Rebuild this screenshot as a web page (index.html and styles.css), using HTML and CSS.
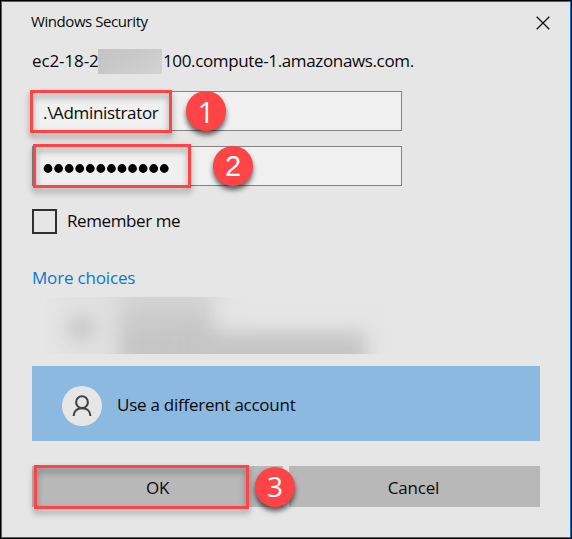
FILE: index.html
```html
<!DOCTYPE html>
<html lang="en">
<head>
<meta charset="utf-8">
<title>Windows Security</title>
<link rel="stylesheet" href="styles.css">
</head>
<body>
<main class="dialog">
  <header class="titlebar">
    <h1 class="title">Windows Security</h1>
    <svg class="close" viewBox="0 0 14 14" width="14" height="14"><path d="M.7.7l12.6 12.6M13.3.7L.7 13.3"/></svg>
  </header>
  <p class="host"><span class="host-start">ec2-18-2</span><span class="redacted"></span><span class="host-end">100.compute-1.amazonaws.com.</span></p>
  <div class="field user">
    <span class="username">.\Administrator</span>
    <span class="callout callout-user"></span><span class="badge badge-user">1</span>
  </div>
  <div class="field">
    <svg class="dots" width="128" height="10" viewBox="0 0 128 10"><path d="M5 4.5h120"/></svg>
    <span class="callout callout-pass"></span><span class="badge badge-pass">2</span>
  </div>
  <label class="remember"><span class="box"></span><span class="remember-text">Remember me</span></label>
  <a class="more">More choices</a>
  <div class="account-hidden"><i class="smudge face"></i><i class="smudge name"></i><i class="smudge detail"></i></div>
  <div class="account">
    <span class="avatar"><svg width="20" height="22" viewBox="0 0 20 22"><circle cx="10" cy="7.2" r="5.9"/><path d="M1.6 21c0-5 3.6-7.9 8.4-7.9s8.4 2.9 8.4 7.9"/></svg></span>
    <span class="account-text">Use a different account</span>
  </div>
  <footer class="actions">
    <div class="button primary"><span class="button-text">OK</span><span class="callout callout-ok"></span><span class="badge badge-ok">3</span></div>
    <div class="button"><span class="button-text">Cancel</span></div>
  </footer>
</main>
</body>
</html>
```
FILE: styles.css
```css
* { box-sizing: border-box; }
body { margin: 0; background: #000; font-family: "Open Sans", "Noto Sans", sans-serif; font-size: 17px; color: #0a0a0a; }
.dialog { width: 570px; height: 537px; margin: 1px; border: 1px solid #0874cc; background: #e6e6e6; padding: 0 30px; white-space: nowrap; }
.titlebar { height: 41px; display: flex; justify-content: space-between; }
.title { margin: 8px 0 0 -1px; font-size: 15px; line-height: 22px; font-weight: 400; letter-spacing: -.43px; }
.close { margin: 14px -10px 0 0; fill: none; stroke: #111; stroke-width: 1.3; }
.host { display: flex; align-items: center; margin: 0; height: 34px; letter-spacing: -.36px; }
.host-start { width: 66px; letter-spacing: -.1px; }
.redacted { position: relative; width: 64px; height: 25px; margin-top: 2px; background: linear-gradient(145deg, #c3c3c3, #c9c9c9 45%, #d3d3d3); }
.host-end { margin-left: 1px; }
.field { position: relative; display: flex; align-items: center; width: 370px; height: 40px; margin-top: 15px; padding-left: 10px; border: 1px solid #838383; background: #f0f0f0; }
.user { margin-top: 14px; }
.username { margin-top: 2px; letter-spacing: -.33px; }
.dots { margin-top: 5px; fill: none; stroke: #000; stroke-width: 8.8; stroke-linecap: round; stroke-dasharray: 0 10.57; }
.callout { position: absolute; border: 3px solid #fe4446; filter: drop-shadow(0 4px 3px rgba(0, 0, 0, .4)); }
.callout-user { left: -3px; top: -2px; width: 142px; height: 43px; }
.callout-pass { left: 0; top: -3px; width: 158px; height: 44px; }
.callout-ok { left: 2px; top: -1px; width: 215px; height: 44px; }
.badge { position: absolute; width: 40px; height: 40px; border-radius: 50%; background: #fe4446; color: #fff; text-align: center; font: 29px/41px "Liberation Sans", Arial, sans-serif; box-shadow: 0 4px 5px rgba(0, 0, 0, .6); }
.badge-user { left: 153px; top: -1px; font-family: "Open Sans", sans-serif; }
.badge-pass { left: 180px; top: -1px; }
.badge-ok { left: 223px; top: 1px; font-family: "Open Sans", sans-serif; font-size: 28px; line-height: 39px; }
.remember { display: flex; align-items: center; height: 26px; margin-top: 22px; gap: 10px; letter-spacing: -.4px; }
.box { width: 25px; height: 25px; border: 2.5px solid #303030; }
.remember-text { margin-top: -1px; }
.more { display: block; height: 26px; margin-top: 31px; margin-bottom: 6px; line-height: 26px; color: #0878d2; letter-spacing: -.17px; }
.account-hidden { position: relative; width: 343px; height: 57px; margin-left: 15px; overflow: hidden; background: linear-gradient(90deg, #e4e4e4, #dfdfdf 20%, #e5e5e5 60%); }
.smudge { position: absolute; background: #c5c5c5; filter: blur(9px); }
.face { left: 21px; top: 19px; width: 26px; height: 24px; border-radius: 50%; }
.name { left: 73px; top: -20px; width: 92px; height: 110px; background: linear-gradient(#d4d4d4, #d2d2d2 25%, #c6c6c6 50%); }
.detail { left: 135px; top: 35px; width: 184px; height: 60px; }
.account { display: flex; align-items: center; height: 75px; margin-top: 12px; padding: 4px 0 0 30px; background: #8bb9e0; }
.avatar { width: 40px; height: 40px; border-radius: 50%; background: #e6e6e6; display: flex; align-items: center; justify-content: center; }
.avatar svg { fill: none; stroke: #444; stroke-width: 2.1; }
.account-text { margin: -3px 0 0 15px; letter-spacing: -.25px; }
.actions { display: grid; grid-template-columns: 1fr 1fr; gap: 6px; margin-top: 25px; }
.button { position: relative; display: flex; justify-content: center; align-items: center; height: 41px; padding: 2px 2px 0 0; background: #b8b8b8; letter-spacing: -.2px; }
.primary { z-index: 1; padding-right: 0; }
```
